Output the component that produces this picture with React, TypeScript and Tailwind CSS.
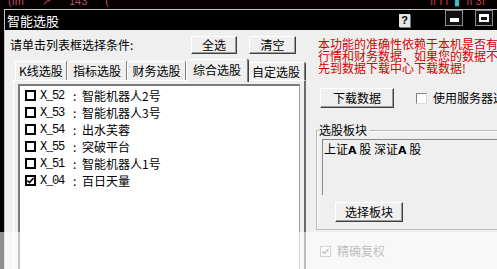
import React from "react";

const cjk = "font-['Noto_Sans_CJK_SC','Liberation_Sans',sans-serif]";

function Btn({ label, w, h }: { label: string; w: string; h: string }) {
  return (
    <div
      className={`flex items-center justify-center bg-[#efefef] border border-t-white border-l-white border-r-[#404040] border-b-[#404040] shadow-[inset_-1px_-1px_0_#9a9a9a] text-[12px] leading-none text-black ${w} ${h}`}
    >
      {label}
    </div>
  );
}

function Check({ checked }: { checked?: boolean }) {
  return (
    <div className="relative w-[11px] h-[11px] border-2 border-black bg-white shrink-0">
      {checked && (
        <svg viewBox="0 0 7 7" className="absolute left-0 top-0 w-[7px] h-[7px]">
          <path d="M0.5 3.5 L2.5 5.5 L6.5 1" stroke="#000" strokeWidth="1.6" fill="none" />
        </svg>
      )}
    </div>
  );
}

const items = [
  { code: "X_52", name: "智能机器人2号", checked: false },
  { code: "X_53", name: "智能机器人3号", checked: false },
  { code: "X_54", name: "出水芙蓉", checked: false },
  { code: "X_55", name: "突破平台", checked: false },
  { code: "X_51", name: "智能机器人1号", checked: false },
  { code: "X_04", name: "百日天量", checked: true },
];

const tabs = [
  { t: "K线选股", w: "w-[52px]" },
  { t: "指标选股", w: "w-[60px]" },
  { t: "财务选股", w: "w-[59px]" },
];

export default function App() {
  return (
    <div className={`relative w-[497px] h-[269px] overflow-hidden bg-[#070000] pt-[9px] pl-[4px] ${cjk}`}>
      {/* stock chart fragments behind the dialog */}
      <div className="absolute left-[8px] top-[-7px] flex gap-[18px] text-[11px] text-[#b0506a] font-['Liberation_Sans',sans-serif]">
        <span>(ım</span>
        <span>↗</span>
        <span>143</span>
        <span>(</span>
      </div>
      <div className="absolute left-[430px] top-[-7px] flex gap-[6px] text-[11px] text-[#c04040] font-['Liberation_Sans',sans-serif]">
        <span>ıı ı ı</span>
        <span className="text-[#40c0c0]">▮</span>
        <span>ıı 3ı</span>
      </div>

      {/* dialog */}
      <div className="relative flex flex-col w-[600px] h-[300px] border-l border-t border-[#c4c4c4] bg-[#efefef]">
        {/* title bar */}
        <div className="flex items-center h-[20px] bg-black shrink-0">
          <span className="ml-[2px] text-white text-[13px] leading-none">智能选股</span>
          <div className="ml-[340px] flex items-center justify-center w-[11px] h-[13px] bg-[#e6e6e6] shadow-[1px_1px_0_#777] text-black text-[11px] font-bold leading-none font-['Liberation_Sans',sans-serif]">
            ?
          </div>
          <div className="ml-[35px] mt-[-4px] flex items-end justify-center w-[18px] h-[16px] border border-[#8a8a8a] bg-[#111] pb-[3px]">
            <div className="w-[9px] h-[4px] bg-white" />
          </div>
          <div className="ml-[12px] mt-[-4px] flex items-center justify-center w-[18px] h-[16px] border border-[#8a8a8a] bg-[#111]">
            <div className="w-[10px] h-[8px] border-2 border-t-[3px] border-white" />
          </div>
        </div>

        {/* body */}
        <div className="flex flex-1">
          {/* left column */}
          <div className="flex flex-col w-[302px] shrink-0">
            <div className="flex items-center mt-[6px] h-[18px]">
              <span className="ml-[5px] w-[181px] text-[12px] leading-none text-black">请单击列表框选择条件:</span>
              <Btn label="全选" w="w-[46px]" h="h-[18px]" />
              <div className="w-[12px]" />
              <Btn label="清空" w="w-[47px]" h="h-[18px]" />
            </div>

            {/* tabs */}
            <div className="flex items-end mt-[4px] pl-[10px] h-[22px]">
              {tabs.map((tb) => (
                <div
                  key={tb.t}
                  className={`flex items-center justify-center ${tb.w} h-[19px] border-t border-l border-white border-r border-r-[#808080] rounded-t-[2px] shadow-[1px_0_0_#404040] text-[12px] leading-none text-black`}
                >
                  {tb.t}
                </div>
              ))}
              <div className="relative z-10 mb-[-2px] flex items-start pt-[4px] justify-center w-[62px] h-[23px] bg-[#efefef] border-t border-l border-white border-r border-r-[#808080] rounded-t-[2px] shadow-[1px_0_0_#404040] text-[12px] leading-none text-black">
                综合选股
              </div>
              <div className="flex items-center justify-center w-[57px] h-[18px] border-t border-white border-r border-r-[#808080] rounded-t-[2px] shadow-[1px_0_0_#404040] text-[12px] leading-none text-black">
                自定选股
              </div>
            </div>

            {/* tab panel */}
            <div className="flex-1 ml-[8px] w-[293px] border-t border-l border-white border-r-2 border-r-[#6a6a6a] pt-[3px] pl-[4px] pr-[4px]">
              <div className="h-full bg-white border-t-2 border-l-2 border-r border-t-[#7a7a7a] border-l-[#7a7a7a] border-r-[#a0a0a0] pt-[1px]">
                {items.map((it) => (
                  <div key={it.code} className="flex items-center h-[17px] pl-[5px]">
                    <Check checked={it.checked} />
                    <span className="ml-[4px] w-[33px] text-[12px] leading-none text-black font-['Liberation_Mono',monospace] tracking-[-1.2px]">
                      {it.code}
                    </span>
                    <span className="w-[9px] text-[12px] leading-none text-black">:</span>
                    <span className="text-[12px] leading-none text-black">{it.name}</span>
                  </div>
                ))}
              </div>
            </div>
          </div>

          {/* right column */}
          <div className="flex flex-col pl-[11px] pt-[8px]">
            <div className="text-[12px] leading-[12px] text-[#d40000] whitespace-nowrap">
              <div>本功能的准确性依赖于本机是否有行情</div>
              <div>行情和财务数据，如果您的数据不完整</div>
              <div>先到数据下载中心下载数据!</div>
            </div>

            <div className="flex items-center mt-[14px] h-[20px]">
              <div className="ml-[2px]">
                <Btn label="下载数据" w="w-[74px]" h="h-[20px]" />
              </div>
              <div className="ml-[22px] w-[11px] h-[11px] bg-white border border-t-[#808080] border-l-[#808080] border-r-[#dcdcdc] border-b-[#dcdcdc]" />
              <span className="ml-[6px] text-[12px] leading-none text-black whitespace-nowrap">使用服务器选股</span>
            </div>

            {/* group box */}
            <div className="relative mt-[22px] ml-[-2px] w-[200px] h-[100px] border border-[#b8b8b8] shadow-[inset_1px_1px_0_#fff]">
              <span className="absolute left-[2px] top-[-7px] bg-[#efefef] pr-[2px] text-[12px] leading-none text-black">选股板块</span>
              <div className="mt-[8px] ml-[5px] h-[56px] bg-[#efefef] border-t border-l border-[#8a8a8a] pl-[1px] pt-[2px] text-[12px] leading-[13px] text-black whitespace-nowrap">
                上证<b className="font-['DejaVu_Sans',sans-serif] text-[11px]">A</b> 股 深证<b className="font-['DejaVu_Sans',sans-serif] text-[11px]">A</b> 股
              </div>
              <div className="mt-[7px] ml-[18px]">
                <Btn label="选择板块" w="w-[68px]" h="h-[20px]" />
              </div>
            </div>

            <div className="flex items-center mt-[15px] ml-[2px]">
              <div className="relative w-[11px] h-[11px] bg-[#f4f4f4] border border-[#9a9a9a]">
                <svg viewBox="0 0 9 9" className="absolute left-0 top-0 w-[9px] h-[9px]">
                  <path d="M1.5 4.5 L3.5 6.5 L7.5 2" stroke="#777" strokeWidth="1.4" fill="none" />
                </svg>
              </div>
              <span className="ml-[6px] text-[12px] leading-none text-[#707070]">精确复权</span>
            </div>
          </div>
        </div>
      </div>

      {/* washed-out bottom band */}
      <div className="absolute left-0 right-0 top-[232px] bottom-0 bg-white/55" />
    </div>
  );
}
